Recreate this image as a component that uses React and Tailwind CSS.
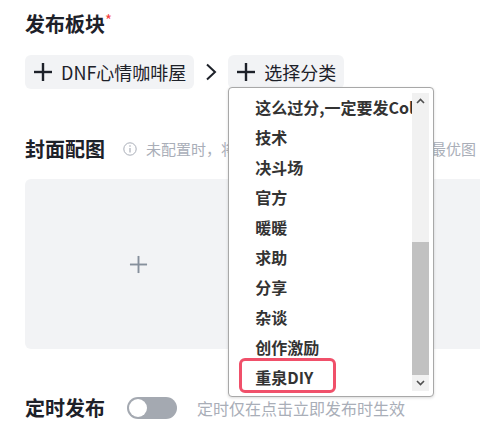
export default function App() {
  const items = ["这么过分,一定要发Color吗", "技术", "决斗场", "官方", "暖暖", "求助", "分享", "杂谈", "创作激励", "重泉DIY"];
  const Plus = ({ color = "#1d2129", size = 20, sw = 2.4 }) => (
    <svg width={size} height={size} viewBox="0 0 20 20" fill="none">
      <line x1="10" y1="1" x2="10" y2="19" stroke={color} strokeWidth={sw} />
      <line x1="1" y1="10" x2="19" y2="10" stroke={color} strokeWidth={sw} />
    </svg>
  );
  return (
    <div className="w-[480px] h-[424px] overflow-hidden bg-white pl-[25px] pt-[10px] font-['Noto_Sans_CJK_SC',sans-serif]">
      <div className="h-[28px] flex items-start text-[20px] leading-[28px] font-bold text-[#1d2129]">
        <span>发布板块</span>
        <span className="text-[#f53f3f] text-[15px] leading-[20px] font-normal">*</span>
      </div>

      <div className="mt-[17px] flex items-center h-[34px]">
        <div className="h-[34px] bg-[#f2f3f5] rounded-[6px] px-[8px] flex items-center gap-[8px] text-[18px] text-[#1d2129] whitespace-nowrap">
          <Plus />
          <span>DNF心情咖啡屋</span>
        </div>
        <svg className="ml-[11px]" width="12" height="18" viewBox="0 0 12 18" fill="none">
          <polyline points="2,1.5 10,9 2,16.5" stroke="#1d2129" strokeWidth="2" fill="none" />
        </svg>
        <div className="relative ml-[11px]">
          <div className="h-[34px] bg-[#f2f3f5] rounded-[6px] px-[8px] flex items-center gap-[8px] text-[18px] text-[#1d2129] whitespace-nowrap">
            <Plus />
            <span>选择分类</span>
          </div>
          <div className="absolute left-0 top-[32px] w-[206px] h-[310px] border border-[#a8a8a8] rounded-[4px] bg-white flex z-10 shadow-[0_1px_3px_rgba(0,0,0,0.15)]">
            <div className="flex-1 min-w-0 overflow-hidden pt-[4px]">
              {items.map((t, i) => (
                <div key={i} className="relative h-[30px] pl-[26px] flex items-center text-[16px] font-bold text-[#333333] whitespace-nowrap">
                  {t}
                  {i === items.length - 1 && (
                    <div className="absolute left-[10px] top-[-4px] w-[97px] h-[35px] border-[3px] border-[#f0506a] rounded-[6px]" />
                  )}
                </div>
              ))}
            </div>
            <div className="w-[17px] my-[5px] mr-[4px] flex flex-col">
              <div className="h-[16px] bg-[#f1f1f1] flex items-center justify-center">
                <svg width="9" height="6" viewBox="0 0 9 6" fill="none">
                  <polyline points="1,5 4.5,1.5 8,5" stroke="#505050" strokeWidth="1.6" fill="none" />
                </svg>
              </div>
              <div className="flex-1 bg-[#f1f1f1]" />
              <div className="h-[133px] bg-[#c1c1c1]" />
              <div className="h-[16px] bg-[#f1f1f1] flex items-center justify-center">
                <svg width="9" height="6" viewBox="0 0 9 6" fill="none">
                  <polyline points="1,1 4.5,4.5 8,1" stroke="#505050" strokeWidth="1.6" fill="none" />
                </svg>
              </div>
            </div>
          </div>
        </div>
      </div>

      <div className="mt-[46px] h-[28px] flex items-center whitespace-nowrap">
        <span className="text-[20px] leading-[28px] font-bold text-[#1d2129]">封面配图</span>
        <svg className="ml-[18px] shrink-0" width="14" height="14" viewBox="0 0 14 14" fill="none">
          <circle cx="7" cy="7" r="6.2" stroke="#a9aeb8" strokeWidth="1" />
          <line x1="7" y1="6" x2="7" y2="10.5" stroke="#a9aeb8" strokeWidth="1.2" />
          <circle cx="7" cy="4" r="0.8" fill="#a9aeb8" />
        </svg>
        <span className="ml-[9px] text-[15px] text-[#a9aeb8]">未配置时，将默认截取正文中首张图片作为最优图</span>
      </div>

      <div className="mt-[16px] flex gap-[12px]">
        <div className="shrink-0 w-[226px] h-[170px] bg-[#f2f3f5] rounded-[6px] flex items-center justify-center">
          <Plus color="#86909c" size={19} sw={2} />
        </div>
        <div className="shrink-0 w-[226px] h-[170px] bg-[#f2f3f5] rounded-[6px] flex items-center justify-center">
          <Plus color="#86909c" size={19} sw={2} />
        </div>
      </div>

      <div className="mt-[45px] h-[28px] flex items-center whitespace-nowrap">
        <span className="text-[20px] leading-[28px] font-bold text-[#1d2129]">定时发布</span>
        <div className="ml-[22px] w-[50px] h-[22px] rounded-full bg-[#a4a9b1] p-[2px] flex items-center">
          <div className="w-[18px] h-[18px] rounded-full bg-white" />
        </div>
        <span className="ml-[20px] text-[16px] text-[#a9aeb8]">定时仅在点击立即发布时生效</span>
      </div>
    </div>
  );
}
